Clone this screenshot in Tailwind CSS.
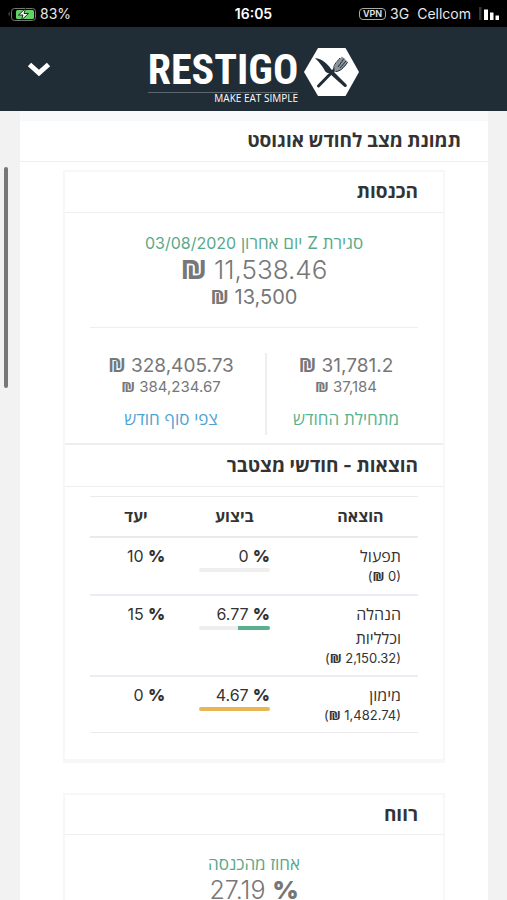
<!DOCTYPE html>
<html lang="he" dir="rtl">
<head>
<meta charset="utf-8">
<meta name="viewport" content="width=device-width, initial-scale=1">
<title>Restigo</title>
<script src="https://cdn.jsdelivr.net/npm/@tailwindcss/browser@4"></script>
</head>
<body class="h-screen overflow-hidden bg-[#f2f2f2] font-[Inter,'Open_Sans',sans-serif] text-[#333]">
<div dir="ltr" class="grid h-[27px] grid-cols-3 items-center bg-black px-2 text-sm text-[#e8e8e8]">
  <div class="flex items-center gap-1">
    <svg class="h-4 w-7" viewBox="0 0 28 16" aria-hidden="true"><path d="M1.500 6v4C.3 9.500.3 6.500 1.500 6z" fill="#777"/><rect x="3.500" y="2.500" width="24" height="12" rx="3" fill="none" stroke="#777"/><rect x="8" y="4" width="18" height="9" rx="1.500" fill="#62d267"/><path d="M17.500 2.500l-7 6.500h4.500l-1.500 5 7-6.500H16z" fill="#fff" stroke="#000" stroke-width=".8"/></svg>
    <span>83%</span>
  </div>
  <div class="text-center font-semibold text-white">16:05</div>
  <div class="flex items-center justify-end gap-2 whitespace-nowrap">
    <span class="flex items-center gap-1"><span class="rounded border border-[#aaa] px-[3px] text-[9px] leading-[10px] font-semibold">VPN</span><span>3G</span></span>
    <span>Cellcom</span>
    <svg class="h-4 w-5" viewBox="0 0 20 16" aria-hidden="true"><path d="M0 1h2.500v13H0z" fill="#333"/><path d="M5 3.500h4V14H5zM11 6.500h3.500V14H11zM16.500 9.500h3.500V14h-3.500z" fill="#fff"/></svg>
  </div>
</div>
<header dir="ltr" class="grid h-[84px] grid-cols-[1fr_auto_1fr] items-center bg-[#202d36] text-white">
  <button type="button" aria-label="תפריט" class="ml-[27px] flex w-6 justify-center"><svg class="h-4 w-6" viewBox="0 0 24 16" aria-hidden="true"><path d="M2.500 3.500l9.500 8.500 9.500-8.500" fill="none" stroke="#fff" stroke-width="5"/></svg></button>
  <a href="#" class="flex items-start gap-[6px] pt-3">
    <span class="flex flex-col items-end">
      <span class="flex h-[45px] w-[150px] items-center justify-center border-b border-[#5c666e] font-['Roboto_Condensed','Liberation_Sans_Narrow',sans-serif] text-[42px] leading-[40px] font-bold">RESTIGO</span>
      <span class="font-['Open_Sans',sans-serif] text-[10px] leading-[10px]">MAKE EAT SIMPLE</span>
    </span>
    <svg class="h-12 w-[55px]" viewBox="0 0 55 48" aria-hidden="true"><path d="M14 0h27.500L55 24 41.500 48H14L0 24z" fill="#fff"/><path d="M14.500 38L33 19" stroke="#202d36" stroke-width="3" stroke-linecap="round"/><path d="M11 10c7 1 12 5 16 11l15 15c2 2 0 4-2 2.500L25 25c-2 0-3-.5-4-2-2-4-5-8-10-13z" fill="#202d36"/><path d="M30 22c0-5 3-8 6.500-12l1.500-1.500 6 5.500-2 3c-3 4-6 6-10 7z" fill="#8b949a"/><path d="M30 22c-1-5 2-7 6-12M31.500 23.500c5 0 8-4 12-9M34 19l6-8.500M36 20l6-7" fill="none" stroke="#202d36" stroke-width="1"/></svg>
  </a>
  <span></span>
</header>
<div aria-hidden="true" class="absolute top-[167px] left-1 h-[221px] w-1 rounded-full bg-[#777]"></div>
<main class="mr-[19px] ml-5 min-h-full border-t-[10px] border-[#f8f9fb] bg-white">
  <h1 class="flex h-[41px] items-center border-b border-[#eee] px-[27px] text-[19px] font-bold">תמונת מצב לחודש אוגוסט</h1>
  <div class="px-[43px] pt-2">
    <section class="border-2 border-b-4 border-[#f7f7f7] bg-white">
      <h2 class="flex h-[41px] items-center border-b border-[#eee] px-[25px] pt-px text-[19px] font-bold">הכנסות</h2>
      <div class="px-[25px] pt-[18px] text-center text-[#777]">
        <a href="#" class="block text-[17px] leading-6 text-[#58a98a]">סגירת Z יום אחרון <bdi class="text-base">03/08/2020</bdi></a>
        <div dir="ltr" class="text-[26px] leading-[29px] font-light"><b class="font-['Open_Sans'] font-extrabold">₪</b> 11,538.46</div>
        <div dir="ltr" class="text-xl leading-[26px]"><b class="font-['Open_Sans'] font-bold">₪</b> 13,500</div>
        <hr class="mt-[17px] border-[#eee]">
      </div>
      <div class="mt-[25px] mb-2 flex pr-[18px] pl-3 text-center text-[#777]">
        <div class="flex h-[82px] flex-[158] flex-col border-l-2 border-[#eee]">
          <div dir="ltr" class="text-[19px] leading-6"><b class="font-['Open_Sans']">₪</b> 31,781.2</div>
          <div dir="ltr" class="text-[15px] leading-4"><b class="font-['Open_Sans']">₪</b> 37,184</div>
          <a href="#" class="mt-3 text-[17px] leading-6 text-[#58b38d]">מתחילת החודש</a>
        </div>
        <div class="flex h-[82px] flex-[188] flex-col">
          <div dir="ltr" class="text-[19px] leading-6"><b class="font-['Open_Sans']">₪</b> 328,405.73</div>
          <div dir="ltr" class="text-[15px] leading-4"><b class="font-['Open_Sans']">₪</b> 384,234.67</div>
          <a href="#" class="mt-3 text-[17px] leading-6 text-[#4fa3d1]">צפי סוף חודש</a>
        </div>
      </div>
      <h2 class="flex h-11 items-center border-t-2 border-b border-[#eee] px-[25px] pt-px text-[19px] font-bold">הוצאות - חודשי מצטבר</h2>
      <div class="px-[25px] pt-[9px] pb-[26px]">
        <table class="w-full table-fixed border-collapse text-base leading-6">
          <colgroup><col class="w-[40%]"><col class="w-[32%]"><col class="w-[28%]"></colgroup>
          <thead>
            <tr class="h-10 border-t border-b-2 border-[#e9e9ee] text-base"><th scope="col" class="pr-4 pl-8">הוצאה</th><th scope="col">ביצוע</th><th scope="col">יעד</th></tr>
          </thead>
          <tbody class="align-top">
            <tr class="h-[58px] border-b-2 border-[#ececf3]">
              <td class="pt-[6px] pr-[17px]">תפעול<div dir="ltr" class="text-right text-[13px] leading-4">(<b class="font-['Open_Sans']">₪</b> 0)</div></td>
              <td class="px-[17px] pt-[6px]"><div dir="ltr" class="text-right">0 <b class="font-black">%</b></div><div class="h-1 rounded-sm bg-[#eee]"></div></td>
              <td class="pt-[6px] pr-[17px]"><div dir="ltr" class="text-right">10 <b class="font-black">%</b></div></td>
            </tr>
            <tr class="h-[81px] border-b-2 border-[#ececf3]">
              <td class="pt-[6px] pr-[17px]">הנהלה<br>וכלליות<div dir="ltr" class="text-right text-[13px] leading-4">(<b class="font-['Open_Sans']">₪</b> 2,150.32)</div></td>
              <td class="px-[17px] pt-[6px]"><div dir="ltr" class="text-right">6.77 <b class="font-black">%</b></div><div class="h-1 rounded-sm bg-[#eee]"><div class="h-1 rounded-r-sm bg-[#57b08e]" style="width:45%"></div></div></td>
              <td class="pt-[6px] pr-[17px]"><div dir="ltr" class="text-right">15 <b class="font-black">%</b></div></td>
            </tr>
            <tr class="h-[57px] border-b border-[#e9e9ee]">
              <td class="pt-[6px] pr-[17px]">מימון<div dir="ltr" class="text-right text-[13px] leading-4">(<b class="font-['Open_Sans']">₪</b> 1,482.74)</div></td>
              <td class="px-[17px] pt-[6px]"><div dir="ltr" class="text-right">4.67 <b class="font-black">%</b></div><div class="h-1 rounded-sm bg-[#e9b654]"></div></td>
              <td class="pt-[6px] pr-[17px]"><div dir="ltr" class="text-right">0 <b class="font-black">%</b></div></td>
            </tr>
          </tbody>
        </table>
      </div>
    </section>
    <section class="mt-[30px] border-2 border-[#f7f7f7] bg-white">
      <h2 class="flex h-10 items-center border-b border-[#eee] px-[25px] pt-px text-[19px] font-bold">רווח</h2>
      <div class="px-[25px] pt-[17px] text-center text-[#777]">
        <a href="#" class="block text-[17px] leading-6 text-[#58a98a]">אחוז מהכנסה</a>
        <div dir="ltr" class="text-[25px] leading-[29px] font-light">27.19 <b class="font-black">%</b></div>
      </div>
    </section>
  </div>
</main>
</body>
</html>
